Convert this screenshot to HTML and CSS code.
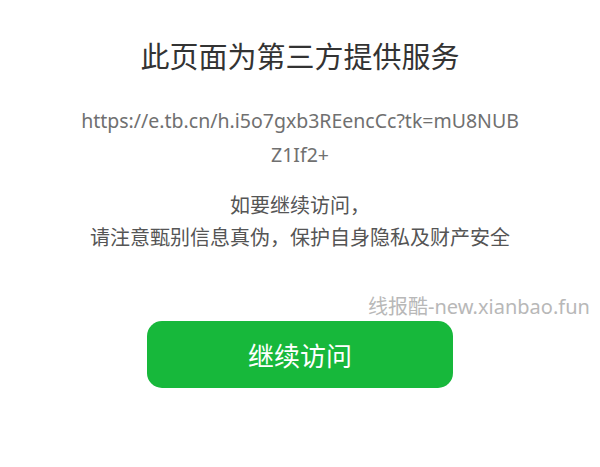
FILE: index.html
```html
<!DOCTYPE html>
<html lang="zh-CN">
<head>
<meta charset="utf-8">
<link rel="stylesheet" href="styles.css">
</head>
<body>
<main class="page">
  <h1 class="title">此页面为第三方提供服务</h1>
  <p class="url">https://e.tb.cn/h.i5o7gxb3REencCc?tk=mU8NUBZ1If2+</p>
  <p class="notice">如要继续访问，<br>请注意甄别信息真伪，保护自身隐私及财产安全</p>
  <div class="action">
    <button class="btn">继续访问</button>
  </div>
</main>
<div class="watermark">线报酷-new.xianbao.fun</div>
</body>
</html>
```
FILE: styles.css
```css
html, body {
  margin: 0;
  padding: 0;
  background: #fff;
}
body {
  width: 600px;
  height: 467px;
  position: relative;
  overflow: hidden;
  font-family: "Noto Sans", "Noto Sans CJK SC", sans-serif;
}
.page {
  display: flex;
  flex-direction: column;
  align-items: center;
  padding-top: 37px;
}
.title {
  margin: 0;
  font-size: 29px;
  font-weight: 400;
  line-height: 40px;
  color: #333;
}
.url {
  margin: 27px 0 0;
  width: 438px;
  font-size: 19.5px;
  line-height: 34px;
  color: #707070;
  text-align: center;
  word-break: break-all;
}
.notice {
  margin: 18px 0 0;
  font-size: 20px;
  line-height: 32px;
  color: #555;
  text-align: center;
}
.action {
  margin-top: 67px;
}
.btn {
  display: block;
  width: 306px;
  height: 67px;
  border: none;
  border-radius: 15px;
  background: #17b83b;
  color: #fff;
  font-family: "Noto Sans CJK SC", sans-serif;
  font-size: 26px;
  cursor: pointer;
}
.watermark {
  position: absolute;
  left: 368px;
  top: 294px;
  font-size: 20px;
  line-height: 26px;
  color: #b8b8b8;
  white-space: nowrap;
}
```
